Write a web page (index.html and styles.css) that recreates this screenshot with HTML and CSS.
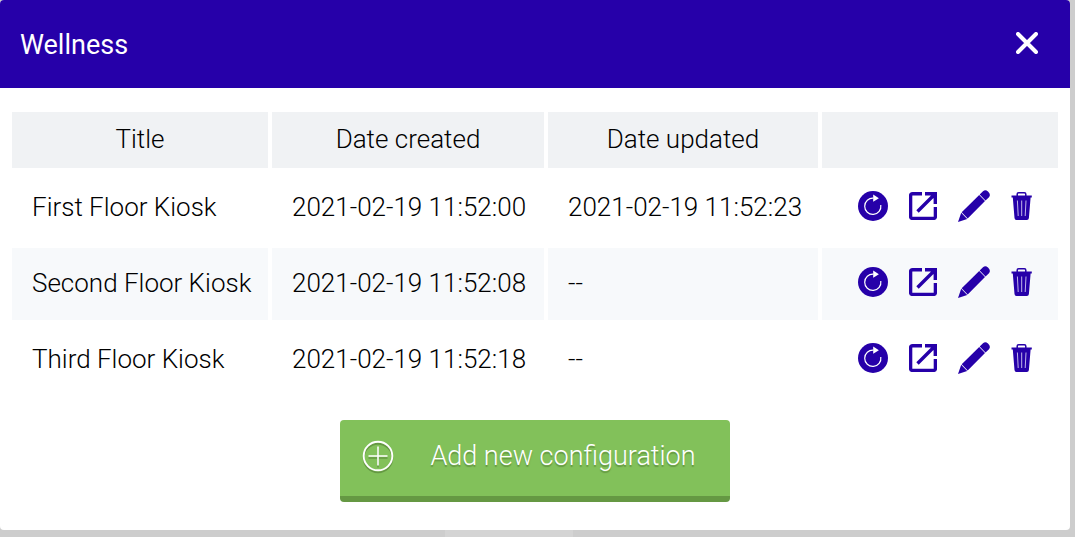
FILE: index.html
```html
<!DOCTYPE html>
<html lang="en">
<head>
<meta charset="utf-8">
<title>Wellness</title>
<link rel="stylesheet" href="styles.css">
</head>
<body>
<svg class="sprite" aria-hidden="true">
  <symbol id="reload" viewBox="0 0 30 30">
    <circle cx="15" cy="15" r="15" fill="currentColor"/>
    <path d="M15.500 7.200A8.100 8.100 0 1 0 22.800 14" fill="none" stroke="#fff" stroke-width="1.200"/>
    <path d="M15.200 3.500L20.900 7.200L15.200 10.800Z" fill="#fff"/>
  </symbol>
  <symbol id="open" viewBox="0 0 28 28">
    <path d="M13 1.800H3.600Q1.600 1.800 1.600 3.800V24.400Q1.600 26.400 3.600 26.400H24.400Q26.400 26.400 26.400 24.400V15M8.500 19.500L25 3" fill="none" stroke="currentColor" stroke-width="3.400"/>
    <path d="M16 0H28V12H24.600V6.500L21.500 3.400H16Z" fill="currentColor"/>
  </symbol>
  <symbol id="pencil" viewBox="0 0 32 32">
    <path d="M0 32L3.200 22.800L9.200 29ZM3.700 22.200L21.200 5.100L27 11L9.700 28.500ZM21.700 4.600L25 1.300Q27.400-.9 30 1.600Q33.200 4.700 31 7.200L27.500 10.500Z" fill="currentColor"/>
  </symbol>
  <symbol id="trash" viewBox="0 0 22 28">
    <path d="M6.200 4V2.200Q6.200.8 7.600.8H13.400Q14.800.8 14.800 2.200V4" fill="none" stroke="currentColor" stroke-width="1.500"/>
    <path d="M.5 3.500H20.800V5.500H.5ZM1.800 5.500H19.600L17.900 26Q17.700 28 15.900 28H5.400Q3.700 28 3.500 26Z" fill="currentColor"/>
    <path d="M6.400 8.500L7.200 24M10.700 8.500V24M15 8.500L14.200 24" fill="none" stroke="#d3caef" stroke-width=".9"/>
  </symbol>
</svg>
<main class="dialog">
  <header class="dialog-header">
    <h1 class="dialog-title">Wellness</h1>
    <button class="close" type="button" aria-label="Close">
      <svg class="close-icon" viewBox="0 0 22 22"><path d="M2 2L20 20M20 2L2 20" fill="none" stroke="currentColor" stroke-width="4" stroke-linecap="round"/></svg>
    </button>
  </header>
  <div class="dialog-body">
    <table class="configs">
      <colgroup><col class="col-title"><col class="col-created"><col class="col-updated"><col class="col-actions"></colgroup>
      <thead>
        <tr><th scope="col">Title</th><th scope="col">Date created</th><th scope="col">Date updated</th><th aria-label="Actions"></th></tr>
      </thead>
      <tbody>
        <tr>
          <td>First Floor Kiosk</td><td>2021-02-19 11:52:00</td><td>2021-02-19 11:52:23</td>
          <td class="actions-cell"><div class="actions">
            <button class="action" type="button" aria-label="Reload"><svg class="icon-reload"><use href="#reload"/></svg></button>
            <button class="action" type="button" aria-label="Open"><svg class="icon-open"><use href="#open"/></svg></button>
            <button class="action" type="button" aria-label="Edit"><svg class="icon-pencil"><use href="#pencil"/></svg></button>
            <button class="action" type="button" aria-label="Delete"><svg class="icon-trash"><use href="#trash"/></svg></button>
          </div></td>
        </tr>
        <tr>
          <td>Second Floor Kiosk</td><td>2021-02-19 11:52:08</td><td>--</td>
          <td class="actions-cell"><div class="actions">
            <button class="action" type="button" aria-label="Reload"><svg class="icon-reload"><use href="#reload"/></svg></button>
            <button class="action" type="button" aria-label="Open"><svg class="icon-open"><use href="#open"/></svg></button>
            <button class="action" type="button" aria-label="Edit"><svg class="icon-pencil"><use href="#pencil"/></svg></button>
            <button class="action" type="button" aria-label="Delete"><svg class="icon-trash"><use href="#trash"/></svg></button>
          </div></td>
        </tr>
        <tr>
          <td>Third Floor Kiosk</td><td>2021-02-19 11:52:18</td><td>--</td>
          <td class="actions-cell"><div class="actions">
            <button class="action" type="button" aria-label="Reload"><svg class="icon-reload"><use href="#reload"/></svg></button>
            <button class="action" type="button" aria-label="Open"><svg class="icon-open"><use href="#open"/></svg></button>
            <button class="action" type="button" aria-label="Edit"><svg class="icon-pencil"><use href="#pencil"/></svg></button>
            <button class="action" type="button" aria-label="Delete"><svg class="icon-trash"><use href="#trash"/></svg></button>
          </div></td>
        </tr>
      </tbody>
    </table>
    <button class="add" type="button">
      <svg class="add-icon" viewBox="0 0 32 32"><path d="M16 6.500V25.500M6.500 16H25.500" stroke="currentColor" stroke-width="1.600"/><circle cx="16" cy="16" r="14.300" fill="none" stroke="currentColor" stroke-width="1.900"/></svg>
      <span>Add new configuration</span>
    </button>
  </div>
</main>
</body>
</html>
```
FILE: styles.css
```css
* { box-sizing: border-box; }

body {
  min-height: 100vh;
  margin: 0;
  padding-right: 5px;
  background: #cdcdcd linear-gradient(#d4d4d4, #d4d4d4) 47% 100% / 128px 8px no-repeat;
  color: #000;
  font-family: Roboto, "Liberation Sans", sans-serif;
  font-size: 26px;
  font-weight: 300;
  line-height: 32px;
}

button {
  padding: 0;
  border: 0;
  background: none;
  font: inherit;
  cursor: pointer;
}

svg { display: block; }

.sprite { display: none; }

.dialog {
  overflow: hidden;
  border-radius: 4px;
  background: #fff;
}

.dialog-header {
  display: flex;
  align-items: center;
  justify-content: space-between;
  padding: 29px 32px 27px 20px;
  background: #2600a9;
  color: #fff;
}

.dialog-title {
  margin: 0;
  font-size: 27px;
  font-weight: 400;
  line-height: 32px;
}

.close {
  padding-bottom: 4px;
  color: #fff;
}

.close-icon {
  width: 22px;
  height: 22px;
}

.dialog-body { padding: 20px 8px 28px; }

.configs {
  width: 100%;
  table-layout: fixed;
  border-spacing: 4px;
}

.col-title { width: 256px; }
.col-created { width: 272px; }
.col-updated { width: 270px; }
.col-actions { width: 236px; }

th {
  padding: 11px 20px 13px;
  background: #f0f2f4;
  font-weight: 300;
}

td {
  padding: 19px 12px 21px 20px;
  white-space: nowrap;
}

tbody tr:nth-child(even) td { background: #f7f9fb; }

.actions-cell { padding: 18px 25px 22px 20px; }

.actions {
  display: flex;
  align-items: center;
  justify-content: flex-end;
  gap: 21px;
}

.action { color: #2600a9; }

.icon-reload { width: 30px; height: 30px; }
.icon-open { width: 28px; height: 28px; }
.icon-pencil { width: 32px; height: 32px; }
.icon-trash { width: 22px; height: 28px; }

.add {
  display: flex;
  align-items: center;
  gap: 36px;
  margin: 20px auto 0;
  padding: 20px 34px 24px 22px;
  border-bottom: 6px solid #659843;
  border-radius: 4px;
  background: #82c15a;
  color: #fff;
  font-size: 27px;
  text-shadow: 0 2px 1px #659843;
}

.add-icon {
  width: 32px;
  height: 32px;
  filter: drop-shadow(0 2px 0 #659843);
}
```
